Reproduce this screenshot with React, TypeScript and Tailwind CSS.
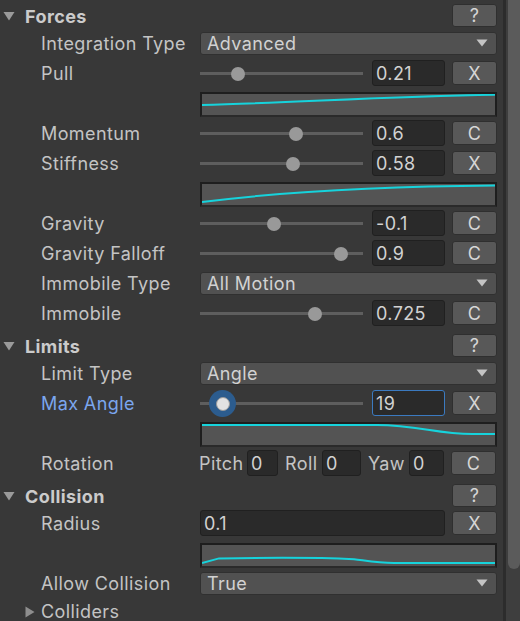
import type { ReactNode } from 'react';

const CURVES = {
  pull: 'M0 11 C 90 9, 180 2.5, 293 0.8',
  stiffness: 'M0 18 C 80 8, 170 2.5, 293 1.6',
  angle: 'M0 1 L 175 1 C 215 1, 235 10, 270 10 L 293 10',
  collision: 'M0 18 L 17 13.4 C 60 12.6, 120 12.6, 152 14.2 C 166 16, 176 18, 192 18 L 293 18',
};

const TEXT = 'text-[18px] tracking-[0.4px]';

function Triangle({ open }: { open: boolean }) {
  return open ? (
    <svg width="12" height="10" viewBox="0 0 12 10" className="shrink-0">
      <path d="M0.5 1 L11.5 1 L6 9.5 Z" fill="#9a9a9a" />
    </svg>
  ) : (
    <svg width="10" height="12" viewBox="0 0 10 12" className="shrink-0">
      <path d="M0.5 0.5 L9.5 6 L0.5 11.5 Z" fill="#8e8e8e" />
    </svg>
  );
}

function SmallButton({ children, h = 'h-[24px]' }: { children: ReactNode; h?: string }) {
  return (
    <div
      className={`w-[45px] ${h} shrink-0 rounded-[3px] border border-[#2f2f2f] bg-[#585858] flex items-center justify-center text-[#d6d6d6] ${TEXT}`}
    >
      {children}
    </div>
  );
}

// headers sit a little lower than the 30px grid; the next row tucks back up under them
function Header({ title, first }: { title: string; first?: boolean }) {
  return (
    <div className={`flex items-center ${first ? 'h-[31px] mb-[-3px]' : 'h-[35px] mb-[-5px]'}`}>
      <div className="w-[25px] pl-[3px] flex items-center">
        <Triangle open />
      </div>
      <span className={`flex-1 font-bold ${TEXT} text-[#cbcbcb] pt-[1px]`}>{title}</span>
      <SmallButton h="h-[23px]">?</SmallButton>
    </div>
  );
}

function Row({ label, children, active, pad = '' }: {
  label?: string; children?: ReactNode; active?: boolean; pad?: string;
}) {
  return (
    <div className={`flex items-center h-[30px] ${pad}`}>
      <span
        className={`w-[200px] shrink-0 pl-[41px] pt-[1px] ${TEXT} whitespace-nowrap ${active ? 'text-[#7ba6ee]' : 'text-[#c4c4c4]'}`}
      >
        {label}
      </span>
      <div className="flex-1 flex items-center">{children}</div>
    </div>
  );
}

function Field({ value, className = 'w-[73px]', focused }: { value: string; className?: string; focused?: boolean }) {
  return (
    <div
      className={`${className} h-[26px] shrink-0 rounded-[3px] border bg-[#2a2a2a] flex items-center pl-[3px] pt-[1px] ${TEXT} text-[#d2d2d2] ${focused ? 'border-[#3b7ac0]' : 'border-[#202020]'}`}
    >
      {value}
    </div>
  );
}

function Dropdown({ value }: { value: string }) {
  return (
    <div className={`flex-1 h-[23px] rounded-[3px] border border-[#303030] bg-[#515151] flex items-center justify-between pl-[6px] pr-[8px] ${TEXT} text-[#d2d2d2]`}>
      <span>{value}</span>
      <svg width="12" height="8" viewBox="0 0 12 8">
        <path d="M0.5 0.5 L11.5 0.5 L6 7.5 Z" fill="#c4c4c4" />
      </svg>
    </div>
  );
}

function Slider({ value, min = 0, max = 1, text, button, active }: {
  value: number; min?: number; max?: number; text: string; button: string; active?: boolean;
}) {
  const left = 7 + ((value - min) / (max - min)) * 149;
  return (
    <>
      <div className="relative w-[163px] h-[26px] shrink-0">
        <div className="absolute left-0 right-0 top-[12px] h-[3px] bg-[#5e5e5e]" />
        {active ? (
          <div
            className="absolute top-[13.5px] w-[27px] h-[27px] -ml-[13.5px] -mt-[13.5px] rounded-full bg-[#2c5c8e] flex items-center justify-center"
            style={{ left }}
          >
            <div className="w-[14px] h-[14px] rounded-full bg-[#e2e2e2] border border-[#9a9a9a]" />
          </div>
        ) : (
          <div
            className="absolute top-[13.5px] w-[14px] h-[14px] -ml-[7px] -mt-[7px] rounded-full bg-[#999999]"
            style={{ left }}
          />
        )}
      </div>
      <div className="w-[9px]" />
      <Field value={text} focused={active} />
      <div className="w-[7px]" />
      <SmallButton>{button}</SmallButton>
    </>
  );
}

function Curve({ d }: { d: string }) {
  return (
    <div className="flex-1 h-[25px] border-2 border-[#1e1e1e] bg-[#545454] border-b-[#2a2a2a]">
      <svg width="100%" height="21" viewBox="0 0 293 21" preserveAspectRatio="none" className="block">
        <path d={d} fill="none" stroke="#16d3dc" strokeWidth="2" />
      </svg>
    </div>
  );
}

export default function App() {
  return (
    <div className="w-[520px] h-[621px] overflow-hidden bg-[#383838] flex" style={{ fontFamily: 'Inter, "Noto Sans", sans-serif' }}>
      <div className="w-[503px] shrink-0 pr-[6px]">
        <Header title="Forces" first />
        <Row label="Integration Type"><Dropdown value="Advanced" /></Row>
        <Row label="Pull"><Slider value={0.21} text="0.21" button="X" /></Row>
        <Row pad="pt-[2px]"><Curve d={CURVES.pull} /></Row>
        <Row label="Momentum"><Slider value={0.6} text="0.6" button="C" /></Row>
        <Row label="Stiffness"><Slider value={0.58} text="0.58" button="X" /></Row>
        <Row pad="pt-[2px]"><Curve d={CURVES.stiffness} /></Row>
        <Row label="Gravity"><Slider value={-0.1} min={-1} text="-0.1" button="C" /></Row>
        <Row label="Gravity Falloff"><Slider value={0.9} text="0.9" button="C" /></Row>
        <Row label="Immobile Type"><Dropdown value="All Motion" /></Row>
        <Row label="Immobile"><Slider value={0.725} text="0.725" button="C" /></Row>

        <Header title="Limits" />
        <Row label="Limit Type"><Dropdown value="Angle" /></Row>
        <Row label="Max Angle" active><Slider value={19} max={180} text="19" button="X" active /></Row>
        <Row pad="pt-[2px]"><Curve d={CURVES.angle} /></Row>
        <Row label="Rotation">
          <span className={`w-[48px] -ml-[1px] pt-[1px] ${TEXT} text-[#c4c4c4]`}>Pitch</span>
          <Field value="0" className="w-[31px]" />
          <span className={`w-[44px] pl-[7px] pt-[1px] ${TEXT} text-[#c4c4c4]`}>Roll</span>
          <Field value="0" className="w-[39px]" />
          <span className={`w-[48px] pl-[7px] pt-[1px] ${TEXT} text-[#c4c4c4]`}>Yaw</span>
          <Field value="0" className="w-[35px]" />
          <div className="w-[7px]" />
          <SmallButton>C</SmallButton>
        </Row>

        <Header title="Collision" />
        <Row label="Radius">
          <Field value="0.1" className="flex-1" />
          <div className="w-[7px]" />
          <SmallButton>X</SmallButton>
        </Row>
        <Row pad="pt-[4px]"><Curve d={CURVES.collision} /></Row>
        <Row label="Allow Collision"><Dropdown value="True" /></Row>
        <div className="flex items-center h-[28px]">
          <div className="w-[41px] pl-[25px] flex items-center">
            <Triangle open={false} />
          </div>
          <span className={`${TEXT} leading-[20px] text-[#c4c4c4]`}>Colliders</span>
        </div>
      </div>

      {/* scrollbar */}
      <div className="w-[3px] h-full bg-[#2c2c2c]" />
      <div className="flex-1 h-full bg-[#3e3e3e] pl-[2px]">
        <div className="w-full h-[569px] rounded-b-[7px] bg-[#5b5b5b]" />
      </div>
    </div>
  );
}
